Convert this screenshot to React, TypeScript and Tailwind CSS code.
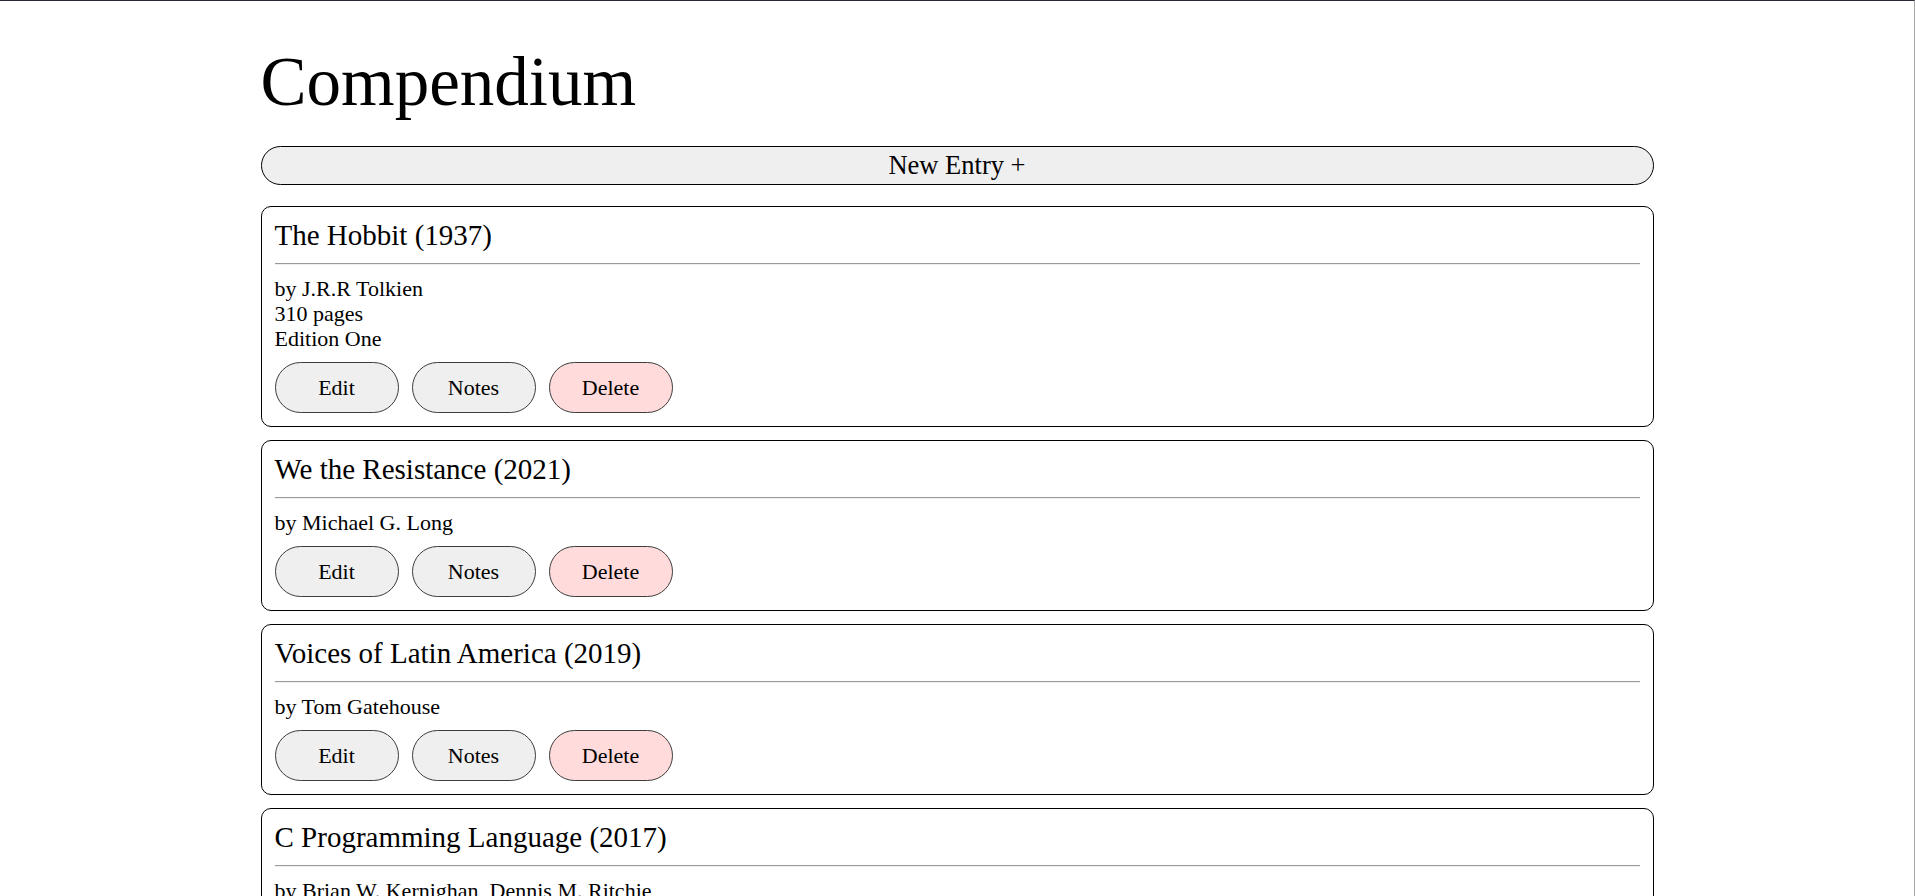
// Reading list page: title, a wide "new entry" button and one card per book.

type Entry = {
  title: string;
  year: number;
  author: string;
  extra?: string[];
};

const entries: Entry[] = [
  {
    title: "The Hobbit",
    year: 1937,
    author: "J.R.R Tolkien",
    extra: ["310 pages", "Edition One"],
  },
  { title: "We the Resistance", year: 2021, author: "Michael G. Long" },
  { title: "Voices of Latin America", year: 2019, author: "Tom Gatehouse" },
  {
    title: "C Programming Language",
    year: 2017,
    author: "Brian W. Kernighan, Dennis M. Ritchie",
  },
];

function EntryCard({ entry }: { entry: Entry }) {
  return (
    <div className="rounded-[10px] border border-black px-[13px] pt-[12px] pb-[13px]">
      <h2 className="text-[29px] leading-[33px]">
        {entry.title} ({entry.year})
      </h2>
      <hr className="mt-[11px] border-t border-b border-t-[#9a9a9a] border-b-[#eeeeee]" />

      <div className="mt-[11px] text-[22px] leading-[25px]">
        <p>by {entry.author}</p>
        {entry.extra?.map((line) => (
          <p key={line}>{line}</p>
        ))}
      </div>

      <div className="mt-[11px] flex gap-[13px]">
        <button className="h-[51px] w-[124px] rounded-full border border-[#3c3c3c] bg-[#efefef] text-[22px]">
          Edit
        </button>
        <button className="h-[51px] w-[124px] rounded-full border border-[#3c3c3c] bg-[#efefef] text-[22px]">
          Notes
        </button>
        <button className="h-[51px] w-[124px] rounded-full border border-[#3c3c3c] bg-[#ffdbdc] text-[22px]">
          Delete
        </button>
      </div>
    </div>
  );
}

export default function App() {
  return (
    <div className="min-h-screen border-t border-r border-t-[#272b36] border-r-[#a6a6a6] bg-white font-['Liberation_Serif',serif] text-black">
      <div className="mx-auto w-[1393px] pt-[47px] pb-10">
        <h1 className="text-[69px] leading-[69px]">Compendium</h1>

        <button className="mt-[29px] flex h-[39px] w-full items-center justify-center rounded-full border border-black bg-[#efefef] text-[26.5px]">
          New Entry +
        </button>

        <div className="mt-[21px] flex flex-col gap-[13px]">
          {entries.map((entry) => (
            <EntryCard key={entry.title} entry={entry} />
          ))}
        </div>
      </div>
    </div>
  );
}
